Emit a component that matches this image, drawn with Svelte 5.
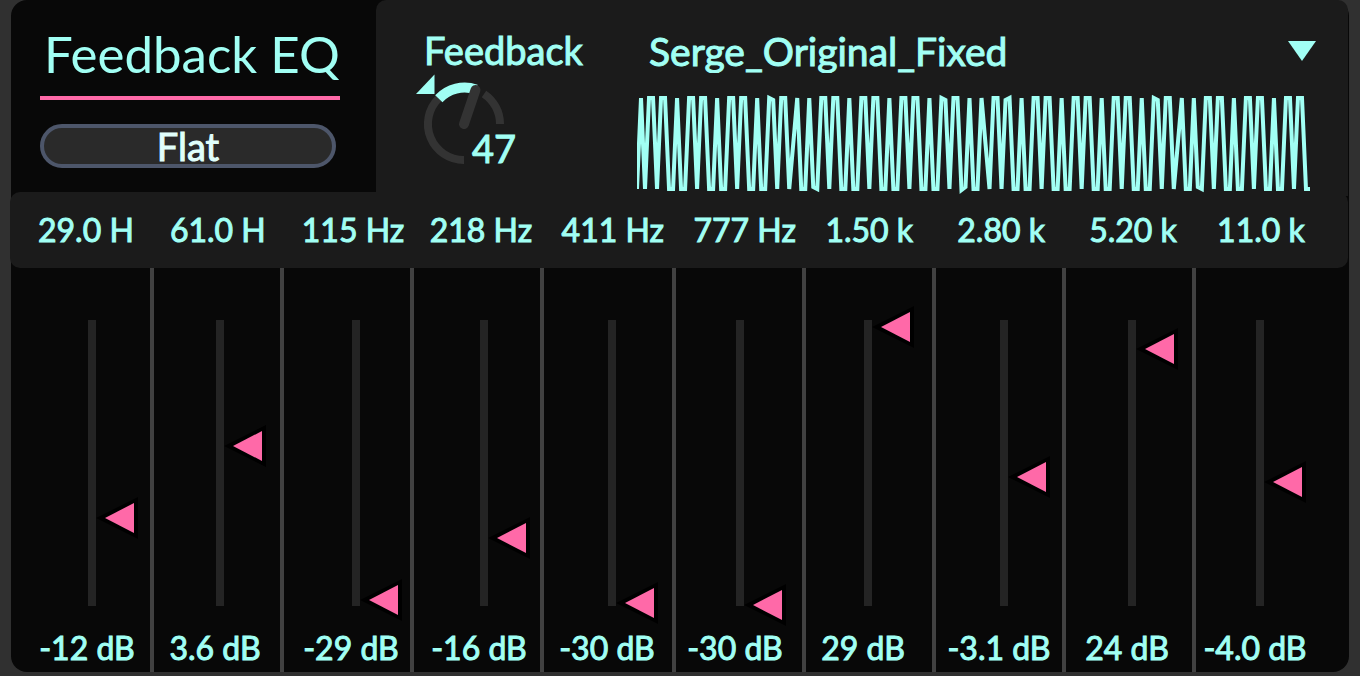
<script lang="ts">
    let feedback = $state(47);
    let flat = $state(false);
    let table = $state('Serge_Original_Fixed');

    const tables = ['Serge_Original_Fixed'];

    const freqs = ['29.0 H', '61.0 H', '115 Hz', '218 Hz', '411 Hz', '777 Hz', '1.50 k', '2.80 k', '5.20 k', '11.0 k'];

    const groups = $state([
        [
            { db: -11.6, label: '-12 dB' },
            { db: 3.7, label: '3.6 dB' }
        ],
        [
            { db: -29, label: '-29 dB' },
            { db: -15.8, label: '-16 dB' },
            { db: -29.6, label: '-30 dB' },
            { db: -30, label: '-30 dB' },
            { db: 28.8, label: '29 dB' }
        ],
        [
            { db: -3, label: '-3.1 dB' },
            { db: 24.1, label: '24 dB' },
            { db: -4, label: '-4.0 dB' }
        ]
    ]);

    // one letter per sample: T/B are the clipped rails, the rest fall between them
    const samples =
        'BTBTTBTTBBTBBTTBTTBBTBBTTBTTBBTBB' +
        'HtBTTBmTBBTbBTTBTTBBTBBTTBTTBBTBBTTBTTBBTBB' +
        'TtBTTDbTBBTmBTTBtTBBTBBTTBTTBBTBBTTBTTBBTBB' +
        'TTBTTBBTBBHtBTTBmTBBTbBTTBTTBBTBBTTBTTBBTBBTTBTTBB';
    const levels: Record<string, number> = { T: 6, H: 6, t: 8, m: 52, b: 95, D: 98, B: 97 };

    const wave = samples
        .split('')
        .map((s, i) => `${i * 4},${levels[s]}`)
        .join(' ');

    function toggleFlat() {
        flat = !flat;
    }
</script>

<main class="device">
    <header>
        <section class="title">
            <h1>Feedback EQ</h1>
            <button class="flat" aria-pressed={flat} onclick={toggleFlat}>Flat</button>
        </section>

        <section class="controls">
            <div class="feedback">
                <label for="feedback">Feedback</label>
                <div class="dial">
                    <svg viewBox="0 0 104 96" width="104" height="96" aria-hidden="true">
                        <g fill="none" stroke="#333" stroke-width="8">
                            <path d="M48 88A36 36 0 0 1 22.5 26.5" />
                            <path d="M68 22A36 36 0 0 1 84 52" />
                        </g>
                        <path d="M22.8 26.8A35.5 35.5 0 0 1 60 17.5" fill="none" stroke="#a1fff4" stroke-width="10" />
                        <path d="M48 52L59.5 18" stroke="#333" stroke-width="10" stroke-linecap="round" />
                        <path d="M18.5 2.5V22H0Z" fill="#a1fff4" />
                    </svg>
                    <input id="feedback" type="range" min="0" max="100" bind:value={feedback} />
                    <output for="feedback">{feedback}</output>
                </div>
            </div>

            <div class="wavetable">
                <div class="picker">
                    <select aria-label="Wavetable" bind:value={table}>
                        {#each tables as name}
                            <option>{name}</option>
                        {/each}
                    </select>
                    <svg class="arrow" viewBox="0 0 28 20" width="28" height="20" aria-hidden="true">
                        <path d="M0 0H28L14 20Z" fill="#a1fff4" />
                    </svg>
                </div>
                <svg class="wave" viewBox="0 0 672 104" preserveAspectRatio="none" aria-hidden="true">
                    <polyline points={wave} fill="none" stroke="#a1fff4" stroke-width="4" />
                </svg>
            </div>
        </section>
    </header>

    <div class="freqs">
        {#each freqs as freq}
            <span>{freq}</span>
        {/each}
    </div>

    <div class="bands">
        <div class="dividers">
            {#each freqs as _}
                <i></i>
            {/each}
        </div>
        <div class="faders">
            {#each groups as group}
                <div class="group" style:flex-grow={group.length}>
                    {#each group as band}
                        <label class="fader">
                            <input type="range" min="-30" max="30" step="0.1" bind:value={band.db} />
                            <span>{band.label}</span>
                        </label>
                    {/each}
                </div>
            {/each}
        </div>
    </div>
</main>

<style>
    :global(body) {
        margin: 0;
        background: #303030;
    }

    .device {
        margin: 0 11px 4px;
        background: #080808;
        border-radius: 16px;
        color: #a1fff4;
        font-family: Lato, "Liberation Sans", sans-serif;
        font-size: 32px;
        line-height: 40px;
        -webkit-text-stroke: 1px currentColor;
    }

    header {
        display: grid;
        grid-template-columns: 365px 1fr;
        height: 192px;
    }

    .title {
        padding: 24px 36px 0 29px;
    }

    h1 {
        margin: 0 0 24px;
        padding: 0 0 12px 4px;
        border-bottom: 4px solid #ff69a8;
        font-size: 51px;
        font-weight: 400;
        line-height: 60px;
        white-space: nowrap;
        -webkit-text-stroke: 0;
    }

    .flat {
        box-sizing: border-box;
        width: 296px;
        height: 44px;
        padding: 0;
        border: 4px solid #4d566a;
        border-radius: 22px;
        background: #2a2a2a;
        color: #e0fffb;
        font: inherit;
        font-size: 38px;
        line-height: 36px;
    }

    .controls {
        display: flex;
        gap: 48px;
        margin-right: 1px;
        padding: 28px 32px 0 40px;
        border-radius: 10px 10px 0 0;
        background: #1b1b1b;
        font-size: 38px;
        line-height: 44px;
    }

    .feedback {
        width: 173px;
    }

    .feedback label {
        display: block;
        padding-left: 8px;
    }

    .dial {
        position: relative;
        width: 104px;
        height: 96px;
    }

    .dial input {
        position: absolute;
        inset: 0;
        width: 100%;
        height: 100%;
        margin: 0;
        opacity: 0;
    }

    .dial output {
        position: absolute;
        right: 4px;
        bottom: -2px;
    }

    .wavetable {
        flex: 1;
        min-width: 0;
    }

    .picker {
        display: grid;
        align-items: center;
        height: 46px;
    }

    .picker > * {
        grid-area: 1 / 1;
    }

    .arrow {
        justify-self: end;
        pointer-events: none;
    }

    select {
        appearance: none;
        width: 100%;
        height: 46px;
        padding: 0 40px 0 12px;
        border: none;
        background: none;
        color: inherit;
        font: inherit;
        font-size: 39px;
    }

    .wave {
        display: block;
        box-sizing: border-box;
        width: 100%;
        height: 104px;
        margin-top: 18px;
        padding-right: 6px;
    }

    .freqs {
        display: grid;
        grid-template-columns: 132fr 132fr 128fr repeat(5, 132fr) 128fr 123fr;
        box-sizing: border-box;
        height: 76px;
        margin: 0 1px 0 -1px;
        padding: 18px 8px 0 28px;
        border-radius: 10px;
        background: #1b1b1b;
        white-space: nowrap;
    }

    .bands {
        display: grid;
        height: 404px;
    }

    .dividers,
    .faders {
        grid-area: 1 / 1;
    }

    .dividers {
        display: grid;
        grid-template-columns: 143fr 130fr 130fr 130fr 132fr repeat(4, 130fr) 153fr;
    }

    .dividers i {
        border-right: 4px solid #414141;
    }

    .dividers i:last-child {
        border: none;
    }

    .faders {
        display: flex;
        gap: 8px;
        padding: 32px 30px 0 12px;
    }

    .group {
        display: flex;
        flex-basis: 0;
    }

    .fader {
        display: flex;
        flex: 1 1 0;
        flex-direction: column;
        align-items: center;
        gap: 2px;
        white-space: nowrap;
    }

    .fader input {
        appearance: none;
        writing-mode: vertical-lr;
        direction: rtl;
        width: 50px;
        height: 326px;
        margin: 0 0 0 52px;
        background: linear-gradient(#242424, #242424) 0 50% / 8px 286px no-repeat;
    }

    .fader input::-webkit-slider-thumb {
        appearance: none;
        width: 50px;
        height: 42px;
        background: url("data:image/svg+xml,%3Csvg xmlns='http://www.w3.org/2000/svg' viewBox='0 0 50 42'%3E%3Cpath d='M8 21L50 0V42Z'/%3E%3Cpath fill='%23ff69a8' d='M17 21L46 6V36Z'/%3E%3C/svg%3E");
    }
</style>
